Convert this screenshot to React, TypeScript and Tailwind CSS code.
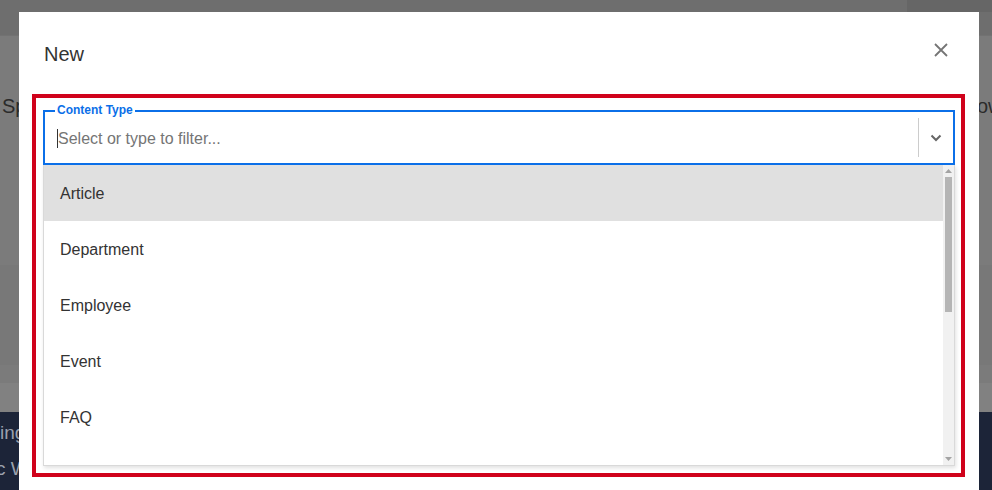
import React from "react";

const items = ["Article", "Department", "Employee", "Event", "FAQ", "Location", "News"];

export default function App() {
  return (
    <div className="relative h-[490px] w-[992px] overflow-hidden font-['Liberation_Sans',Arial,sans-serif]">
      {/* dimmed page behind the modal */}
      <div className="flex h-full flex-col bg-[#7a7a7a]">
        <header className="flex h-[36px] shrink-0 justify-end border-b border-[#727272] bg-[#6e6e6e]">
          <div className="h-[12px] w-[85px] bg-[#666666]" />
        </header>
        <div className="flex h-[229px] shrink-0 flex-col bg-[#7b7b7b] pt-[58px]">
          <div className="flex items-center text-[20px] leading-[24px] text-[#2b2b2b]">
            <span className="pl-[2px]">Spaces</span>
            <span className="ml-auto w-[15px] overflow-hidden whitespace-nowrap">ow</span>
          </div>
        </div>
        <div className="h-[100px] shrink-0 bg-[#787878]" />
        <div className="h-[18px] shrink-0 bg-[#7b7b7b]" />
        <div className="h-[29px] shrink-0 bg-[#818181]" />
        <div className="flex flex-1 flex-col gap-[14px] bg-[#1c2438] pt-[10px] text-[19px] leading-[22px] text-[#9ba1ad]">
          <span>ing</span>
          <span className="-ml-[4px]">c W</span>
        </div>
      </div>

      {/* modal */}
      <div className="absolute left-[19px] top-[12px] bottom-0 w-[960px] bg-white">
        <div className="flex items-start justify-between pl-[25px] pr-[30px] pt-[30px]">
          <h2 className="h-[24px] text-[20px] leading-[24px] text-[#333333]">New</h2>
          <button className="flex h-[16px] w-[16px] items-center justify-center">
            <svg width="16" height="16" viewBox="0 0 16 16" fill="none">
              <path d="M2 2 L14 14 M14 2 L2 14" stroke="#757575" strokeWidth="1.8" />
            </svg>
          </button>
        </div>

        <div className="ml-[13px] mt-[28px] h-[383px] w-[933px] border-4 border-[#d0021b] pl-[7px] pt-[12px]">
          {/* input */}
          <div className="relative flex h-[55px] w-[912px] border-2 border-[#0b6fe8] bg-white">
            <span className="absolute -top-[9px] left-[10px] bg-white px-[2px] text-[12px] font-bold leading-[14px] text-[#0b6fe8]">
              Content Type
            </span>
            <div className="flex flex-1 items-center pl-[12px] pt-[2px]">
              <span className="h-[19px] w-px bg-[#333333]" />
              <span className="text-[16px] leading-[20px] text-[#757575]">Select or type to filter...</span>
            </div>
            <div className="my-[6px] w-px bg-[#cccccc]" />
            <div className="flex w-[34px] items-center justify-center pt-[1px]">
              <svg width="12" height="8" viewBox="0 0 12 8" fill="none">
                <path d="M1.5 1.5 L6 6 L10.5 1.5" stroke="#666666" strokeWidth="2" />
              </svg>
            </div>
          </div>

          {/* listbox */}
          <div className="flex h-[301px] w-[912px] border-x border-b border-[#d9d9d9] bg-white shadow-[1px_2px_4px_rgba(0,0,0,0.12)]">
            <ul className="flex-1 overflow-hidden">
              {items.map((it, i) => (
                <li
                  key={it}
                  className={`flex h-[56px] items-center pl-[16px] pt-[2px] text-[16px] text-[#333333] ${
                    i === 0 ? "bg-[#e0e0e0]" : ""
                  }`}
                >
                  {it}
                </li>
              ))}
            </ul>
            <div className="flex w-[11px] flex-col items-center bg-[#f1f1f1]">
              <div className="flex h-[12px] items-center justify-center">
                <svg width="7" height="4" viewBox="0 0 7 4">
                  <path d="M0 4 L3.5 0 L7 4 Z" fill="#a3a3a3" />
                </svg>
              </div>
              <div className="h-[135px] w-[7px] bg-[#b5b5b5]" />
              <div className="flex-1" />
              <div className="flex h-[12px] items-center justify-center">
                <svg width="7" height="4" viewBox="0 0 7 4">
                  <path d="M0 0 L3.5 4 L7 0 Z" fill="#a3a3a3" />
                </svg>
              </div>
            </div>
          </div>
        </div>
      </div>
    </div>
  );
}
